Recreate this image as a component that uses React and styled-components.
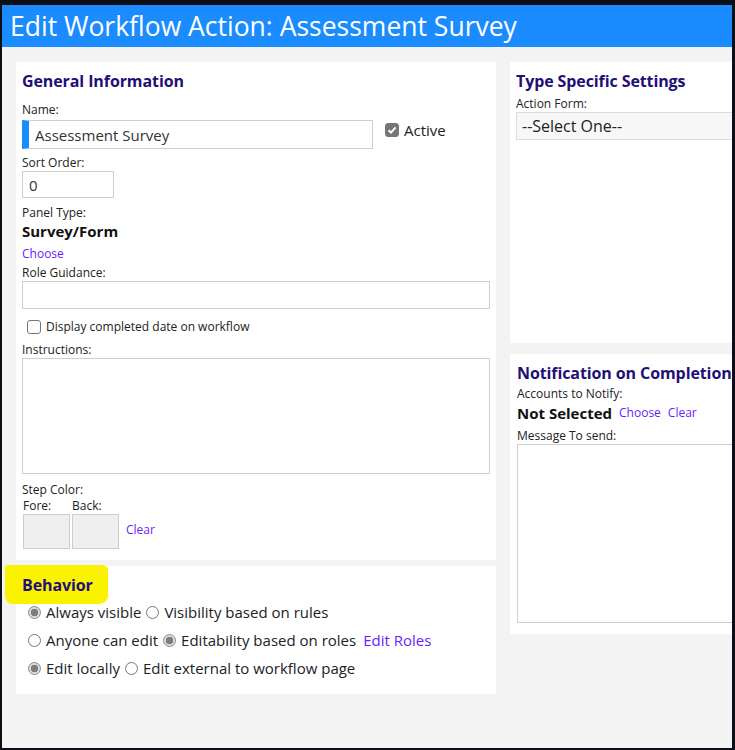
import styled, { createGlobalStyle } from 'styled-components';

const GlobalStyle = createGlobalStyle`
  html, body {
    margin: 0;
    padding: 0;
    background: #fff;
  }
  body {
    font-family: "Open Sans", "Noto Sans", Arial, sans-serif;
    color: #222;
  }
  * {
    box-sizing: border-box;
  }
`;

const Frame = styled.div`
  width: 735px;
  height: 750px;
  border-style: solid;
  border-color: #0c0f16;
  border-width: 5px 3px 2px 2px;
  background: #f3f3f3;
  overflow: hidden;
  display: flex;
  flex-direction: column;
`;

const TitleBar = styled.header`
  flex: none;
  height: 42px;
  background: #1a8cff;
  color: #fff;
  font-size: 26.5px;
  line-height: 42px;
  padding-left: 8px;
  white-space: nowrap;
`;

const Content = styled.div`
  display: flex;
  gap: 14px;
  padding: 15px 0 0 14px;
`;

const Column = styled.div`
  flex: none;
  width: 480px;
  display: flex;
  flex-direction: column;
  gap: ${(p) => p.$gap}px;
`;

const Card = styled.section`
  background: #fff;
  padding: 8px ${(p) => p.$padX || 6}px 11px;
  height: ${(p) => (p.$height ? `${p.$height}px` : 'auto')};
`;

const Heading = styled.h2`
  margin: 0;
  font-size: 16px;
  font-weight: 700;
  line-height: 22px;
  letter-spacing: -0.1px;
  color: #1f0f78;
  white-space: nowrap;
`;

const Label = styled.div`
  font-size: 12px;
  line-height: 16px;
  color: #222;
  margin-top: ${(p) => p.$top || 0}px;
  white-space: nowrap;
`;

const Row = styled.div`
  display: flex;
  align-items: ${(p) => p.$align || 'center'};
  gap: ${(p) => p.$gap || 0}px;
  margin-top: ${(p) => p.$top || 0}px;
`;

const TextBox = styled.input`
  display: block;
  width: ${(p) => p.$width}px;
  height: ${(p) => p.$height || 28}px;
  margin: 0;
  padding: 0 6px;
  border: 1px solid #cfcfcf;
  border-left: ${(p) => (p.$accent ? '7px solid #1a8cff' : '1px solid #cfcfcf')};
  font: inherit;
  font-size: 15px;
  color: #333;
  background: #fff;
  outline: none;
`;

const TextArea = styled.textarea`
  display: block;
  width: ${(p) => p.$width}px;
  height: ${(p) => p.$height}px;
  margin: 0;
  border: 1px solid #cfcfcf;
  resize: none;
  font: inherit;
  outline: none;
`;

const Select = styled.select`
  display: block;
  width: 470px;
  height: 28px;
  margin: 0;
  padding: 0 5px;
  border: 1px solid #dcdcdc;
  background: #f7f7f7;
  font: inherit;
  font-size: 16px;
  color: #222;
  appearance: none;
  outline: none;
`;

const Box = styled.span`
  flex: none;
  width: 14px;
  height: 14px;
  border-radius: 3px;
  display: inline-flex;
  align-items: center;
  justify-content: center;
  background: ${(p) => (p.$checked ? '#767676' : '#fff')};
  border: 1px solid #767676;
`;

const CheckText = styled.span`
  font-size: ${(p) => p.$size}px;
  color: #222;
  white-space: nowrap;
`;

const Strong = styled.div`
  font-size: 15px;
  font-weight: 700;
  line-height: 20px;
  color: #111;
  white-space: nowrap;
  margin-top: ${(p) => p.$top || 0}px;
`;

const Link = styled.a`
  display: inline-block;
  font-size: ${(p) => p.$size || 12}px;
  line-height: ${(p) => (p.$size ? 21 : 16)}px;
  color: #6a1bff;
  text-decoration: none;
  cursor: pointer;
  white-space: nowrap;
`;

const Swatch = styled.div`
  width: 47px;
  height: 35px;
  background: #efefef;
  border: 1px solid #cdcdcd;
`;

const SwatchCol = styled.div`
  display: flex;
  flex-direction: column;
`;

const Marker = styled.span`
  position: relative;
  z-index: 0;
  display: inline-block;
  &::before {
    content: '';
    position: absolute;
    z-index: -1;
    left: -17px;
    right: -15px;
    top: -9px;
    bottom: -8px;
    background: #fbf200;
    border-radius: 2px 8px 10px 8px / 2px 4px 8px 8px;
  }
`;

const RadioLines = styled.div`
  display: flex;
  flex-direction: column;
  gap: 7px;
  margin: 6px 0 0 6px;
`;

const Option = styled.label`
  display: inline-flex;
  align-items: center;
  gap: 5px;
  margin-right: 5px;
  font-size: 15px;
  line-height: 21px;
  color: #222;
  white-space: nowrap;
`;

const Radio = styled.span`
  flex: none;
  width: 13px;
  height: 13px;
  border-radius: 50%;
  border: 1px solid ${(p) => (p.$checked ? '#8a8a8a' : '#767676')};
  background: ${(p) =>
    p.$checked
      ? 'radial-gradient(circle, #7d7d7d 0 3.5px, #dcdcdc 4px 100%)'
      : '#fff'};
`;

const Check = () => (
  <svg width="10" height="10" viewBox="0 0 10 10">
    <path d="M1.6 5.2 4 7.6 8.6 2.4" fill="none" stroke="#fff" strokeWidth="2" />
  </svg>
);

const Checkbox = ({ checked, size, children }) => (
  <Row $gap={5}>
    <Box $checked={checked}>{checked && <Check />}</Box>
    <CheckText $size={size}>{children}</CheckText>
  </Row>
);

const Choice = ({ checked, children }) => (
  <Option>
    <Radio $checked={checked} />
    {children}
  </Option>
);

const App = () => {
  return (
    <>
      <GlobalStyle />
      <Frame>
        <TitleBar>Edit Workflow Action: Assessment Survey</TitleBar>
        <Content>
          <Column $gap={6}>
            <Card>
              <Heading>General Information</Heading>
              <Label $top={10}>Name:</Label>
              <Row $gap={12} $align="flex-start" $top={2}>
                <TextBox $accent $width={351} $height={29} defaultValue="Assessment Survey" readOnly />
                <Checkbox checked size={15}>Active</Checkbox>
              </Row>
              <Label $top={6}>Sort Order:</Label>
              <TextBox $width={92} $height={27} defaultValue="0" readOnly />
              <Label $top={7}>Panel Type:</Label>
              <Strong>Survey/Form</Strong>
              <Link>Choose</Link>
              <Label $top={2}>Role Guidance:</Label>
              <TextBox $width={468} readOnly />
              <Row $top={9} style={{ marginLeft: 5 }}>
                <Checkbox size={12}>Display completed date on workflow</Checkbox>
              </Row>
              <Label $top={7}>Instructions:</Label>
              <TextArea $width={468} $height={116} readOnly />
              <Label $top={8}>Step Color:</Label>
              <Row $gap={2} $align="flex-end" style={{ marginLeft: 1 }}>
                <SwatchCol>
                  <Label>Fore:</Label>
                  <Swatch />
                </SwatchCol>
                <SwatchCol>
                  <Label>Back:</Label>
                  <Swatch />
                </SwatchCol>
                <Link style={{ alignSelf: 'center', marginLeft: 5, marginTop: 12 }}>Clear</Link>
              </Row>
            </Card>
            <Card $height={128}>
              <Heading>
                <Marker>Behavior</Marker>
              </Heading>
              <RadioLines>
                <Row>
                  <Choice checked>Always visible</Choice>
                  <Choice>Visibility based on rules</Choice>
                </Row>
                <Row>
                  <Choice>Anyone can edit</Choice>
                  <Choice checked>Editability based on roles</Choice>
                  <Link $size={15} style={{ marginLeft: 2 }}>Edit Roles</Link>
                </Row>
                <Row>
                  <Choice checked>Edit locally</Choice>
                  <Choice>Edit external to workflow page</Choice>
                </Row>
              </RadioLines>
            </Card>
          </Column>
          <Column $gap={11}>
            <Card $height={281}>
              <Heading>Type Specific Settings</Heading>
              <Label $top={4}>Action Form:</Label>
              <Select defaultValue="">
                <option value="">--Select One--</option>
              </Select>
            </Card>
            <Card $height={280} $padX={7}>
              <Heading>Notification on Completion</Heading>
              <Label $top={2}>Accounts to Notify:</Label>
              <Row $gap={7} $top={1}>
                <Strong>Not Selected</Strong>
                <Link>Choose</Link>
                <Link>Clear</Link>
              </Row>
              <Label $top={5}>Message To send:</Label>
              <TextArea $width={470} $height={179} readOnly />
            </Card>
          </Column>
        </Content>
      </Frame>
    </>
  );
};

export default App;
